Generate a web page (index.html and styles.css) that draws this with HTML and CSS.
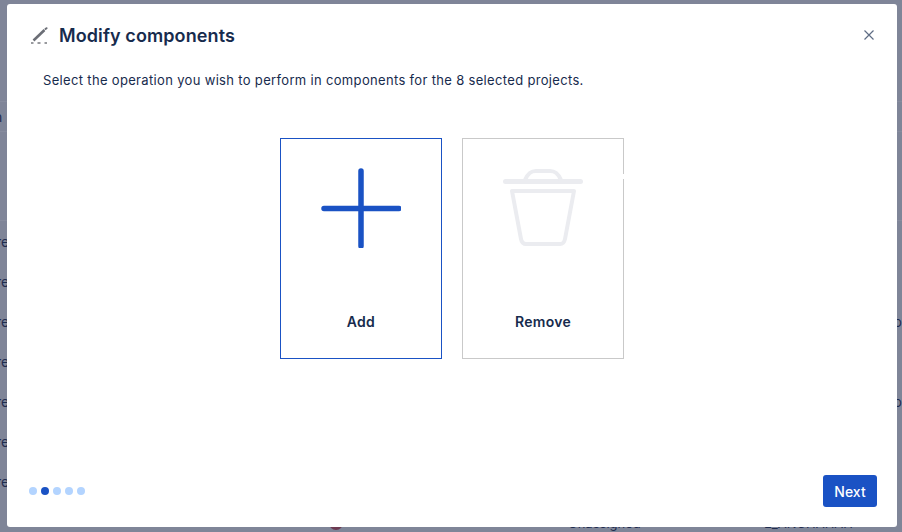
FILE: index.html
```html
<!DOCTYPE html>
<html lang="en">
<head>
<meta charset="utf-8">
<title>Modify components</title>
<link rel="stylesheet" href="styles.css">
</head>
<body>
<div class="backdrop" aria-hidden="true">
  <div class="bg-top"></div>
  <div class="bg-toolbar"><span>n</span></div>
  <div class="bg-gap"></div>
  <div class="bg-rows">
    <div class="bg-row"><span>re</span></div>
    <div class="bg-row"><span>re</span></div>
    <div class="bg-row"><span>re</span><span>o</span></div>
    <div class="bg-row"><span>re</span></div>
    <div class="bg-row"><span>re</span><span>o</span></div>
    <div class="bg-row"><span>re</span></div>
    <div class="bg-row"><span>re</span></div>
    <div class="bg-row bg-last"><i class="bg-avatar"></i><span class="bg-a">Unassigned</span><span class="bg-b">E_ANCHAHAH</span></div>
  </div>
</div>

<div class="modal" role="dialog">
  <header class="modal-head">
    <svg class="pen" width="18" height="18" viewBox="0 0 18 18">
      <path d="M3.5 13.5 L14.5 3" fill="none" stroke="#6b6e76" stroke-width="2.6"/>
      <path d="M15.5 2 L16.5 1.2" fill="none" stroke="#6b6e76" stroke-width="2" stroke-linecap="round"/>
      <path d="M1 16 H3.5 M7.5 16 H10.5 M14.5 16 H17" fill="none" stroke="#77797f" stroke-width="1.6"/>
    </svg>
    <h1>Modify components</h1>
    <svg class="close" width="10" height="10" viewBox="0 0 10 10">
      <path d="M0.5 0.5 L9.5 9.5 M9.5 0.5 L0.5 9.5" fill="none" stroke="#5e6c84" stroke-width="1.2"/>
    </svg>
  </header>
  <p class="intro">Select the operation you wish to perform in components for the 8 selected projects.</p>
  <div class="cards">
    <button class="card selected" type="button">
      <svg width="80" height="80" viewBox="0 0 80 80">
        <path d="M40 3 V78 M3 40.5 H78" fill="none" stroke="#1a52c4" stroke-width="5.5" stroke-linecap="round"/>
      </svg>
      <span>Add</span>
    </button>
    <button class="card" type="button">
      <svg width="80" height="80" viewBox="0 0 80 80">
        <path d="M2.5 13.5 H77.5" fill="none" stroke="#ebecf0" stroke-width="5" stroke-linecap="round"/>
        <path d="M22 12 C25 5 28 3 33 3 H47 C52 3 55 5 58 12" fill="none" stroke="#ebecf0" stroke-width="4"/>
        <path d="M9 23 H71 L62 71 Q61 76 57 76 H23 Q19 76 18 71 Z" fill="none" stroke="#ebecf0" stroke-width="4" stroke-linejoin="round"/>
      </svg>
      <span>Remove</span>
      <i class="notch"></i>
    </button>
  </div>
  <footer class="modal-foot">
    <div class="dots">
      <i></i><i class="on"></i><i></i><i></i><i></i>
    </div>
    <button class="next" type="button">Next</button>
  </footer>
</div>
</body>
</html>
```

FILE: styles.css
```css
* { box-sizing: border-box; }
html, body { margin: 0; padding: 0; height: 100%; }
body {
  width: 902px;
  height: 532px;
  overflow: hidden;
  position: relative;
  background: #7f8598;
  font-family: Inter, "Liberation Sans", sans-serif;
  color: #172b4d;
}

/* dimmed page behind the dialog */
.backdrop { height: 532px; overflow: hidden; color: #1f2c4f; font-size: 14px; }
.bg-top { height: 101px; }
.bg-toolbar {
  height: 31px;
  border-top: 1px solid #878c9e;
  border-bottom: 1px solid #878c9e;
  line-height: 29px;
}
.bg-toolbar span { margin-left: -6px; }
.bg-gap { height: 89px; border-bottom: 1px solid #878c9e; }
.bg-rows { display: flex; flex-direction: column; }
.bg-row {
  height: 40px;
  display: flex;
  justify-content: space-between;
  align-items: center;
  padding-top: 1px;
  white-space: nowrap;
}
.bg-row span:first-child { margin-left: -4px; }
.bg-last { position: relative; font-size: 13px; }
.bg-last .bg-a, .bg-last .bg-b { position: absolute; top: 14px; margin: 0; }
.bg-last .bg-a { left: 568px; }
.bg-last .bg-b { left: 764px; }
.bg-avatar {
  position: absolute;
  left: 329px;
  top: 15px;
  width: 14px;
  height: 14px;
  border-radius: 50%;
  background: #6d3a52;
}

/* dialog */
.modal {
  position: absolute;
  left: 7px;
  top: 4px;
  width: 890px;
  height: 523px;
  background: #fff;
  border-radius: 3px;
  display: flex;
  flex-direction: column;
}
.modal-head {
  display: flex;
  align-items: center;
  height: 32px;
  margin-top: 16px;
  padding: 0 23px;
}
.pen { flex: none; }
.modal-head h1 {
  margin: 0 0 0 11px;
  font-size: 18px;
  line-height: 32px;
  font-weight: 600;
  letter-spacing: 0.1px;
  color: #172b4d;
}
.close { margin-left: auto; margin-right: 0; margin-top: -2px; }
.intro {
  margin: 16px 0 0;
  padding-left: 36px;
  font-size: 13px;
  line-height: 24px;
  letter-spacing: 0.33px;
  color: #172b4d;
}
.cards {
  display: flex;
  justify-content: center;
  gap: 20px;
  margin-top: 46px;
}
.card {
  position: relative;
  width: 162px;
  height: 221px;
  padding: 29px 0 0;
  background: #fff;
  border: 1px solid #c9c9c9;
  border-radius: 0;
  font-family: inherit;
  display: flex;
  flex-direction: column;
  align-items: center;
}
.card span {
  margin-top: 64px;
  font-size: 14px;
  line-height: 20px;
  font-weight: 600;
  letter-spacing: 0.3px;
  color: #172b4d;
}
.card.selected { border-color: #1a52c4; }
.notch {
  position: absolute;
  right: -1px;
  top: 35px;
  width: 1px;
  height: 5px;
  background: #fff;
}
.modal-foot {
  margin-top: auto;
  display: flex;
  justify-content: space-between;
  align-items: center;
  padding: 0 20px 20px 22px;
}
.dots { display: flex; gap: 4px; }
.dots i {
  display: block;
  width: 8px;
  height: 8px;
  border-radius: 50%;
  background: #b3d4ff;
}
.dots i.on { background: #1a52c4; }
.next {
  width: 54px;
  height: 32px;
  padding: 0;
  border: 0;
  border-radius: 3px;
  background: #1a52c4;
  color: #fff;
  font-family: inherit;
  font-size: 14px;
  font-weight: 500;
}
```
